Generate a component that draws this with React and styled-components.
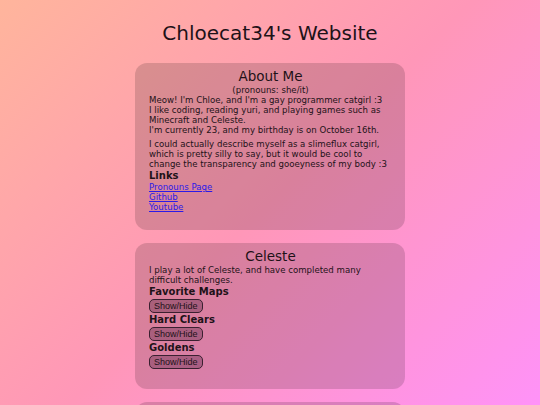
import React from "react";
import styled, { createGlobalStyle } from "styled-components";

const Global = createGlobalStyle`
  html, body { margin: 0; padding: 0; }
  body {
    min-height: 405px;
    background: linear-gradient(135deg, #ffb59c 0%, #ff97b8 50%, #ff92f8 100%);
    background-attachment: fixed;
    font-family: "DejaVu Sans", Verdana, sans-serif;
    color: #1e1218;
  }
`;

const Page = styled.div`
  display: flex;
  flex-direction: column;
  align-items: center;
  padding-top: 20px;
`;

const Title = styled.h1`
  margin: 0 0 17px;
  font-size: 20px;
  font-weight: normal;
  line-height: 26px;
`;

const Card = styled.section`
  width: 243px;
  padding: 5px 13px ${(p) => p.$pb ?? 19}px 14px;
  margin-bottom: 13px;
  border-radius: 12px;
  background: rgba(0, 0, 0, 0.15);
  font-size: 8.6px;
  line-height: 10px;
`;

const CardTitle = styled.h2`
  margin: 0;
  text-align: center;
  font-size: 13.5px;
  font-weight: normal;
  line-height: 17px;
`;

const Sub = styled.div`
  text-align: center;
  line-height: 10px;
`;

const P = styled.p`
  margin: 0 0 ${(p) => p.$gap || 0}px;
`;

const SubHead = styled.h3`
  margin: 1px 0 0;
  font-size: 10px;
  line-height: 12px;
  font-weight: bold;
`;

const LinkList = styled.div`
  display: flex;
  flex-direction: column;
  align-items: flex-start;
`;

const A = styled.a`
  color: #2c1ae8;
  text-decoration: underline;
`;

const Btn = styled.button`
  display: block;
  margin: 1px 0;
  padding: 0 4px;
  height: 14px;
  font-family: "Liberation Sans", Arial, sans-serif;
  font-size: 9px;
  line-height: 12px;
  color: #1e1218;
  background: rgba(60, 20, 50, 0.3);
  border: 1px solid #3a2030;
  border-radius: 5px;
`;

export default function App() {
  return (
    <>
      <Global />
      <Page>
        <Title>Chloecat34's Website</Title>
        <Card $pb={18}>
          <CardTitle>About Me</CardTitle>
          <Sub>(pronouns: she/it)</Sub>
          <P $gap={4}>
            Meow! I'm Chloe, and I'm a gay programmer catgirl :3
            <br />
            I like coding, reading yuri, and playing games such as Minecraft and Celeste.
            <br />
            I'm currently 23, and my birthday is on October 16th.
          </P>
          <P>
            I could actually describe myself as a slimeflux catgirl, which is pretty silly to say, but it would be cool to change the transparency and gooeyness of my body :3
          </P>
          <SubHead>Links</SubHead>
          <LinkList>
            <A href="#">Pronouns Page</A>
            <A href="#">Github</A>
            <A href="#">Youtube</A>
          </LinkList>
        </Card>
        <Card>
          <CardTitle>Celeste</CardTitle>
          <P $gap={1}>I play a lot of Celeste, and have completed many difficult challenges.</P>
          <SubHead>Favorite Maps</SubHead>
          <Btn>Show/Hide</Btn>
          <SubHead>Hard Clears</SubHead>
          <Btn>Show/Hide</Btn>
          <SubHead>Goldens</SubHead>
          <Btn>Show/Hide</Btn>
        </Card>
        <Card>
          <CardTitle>More</CardTitle>
        </Card>
      </Page>
    </>
  );
}
